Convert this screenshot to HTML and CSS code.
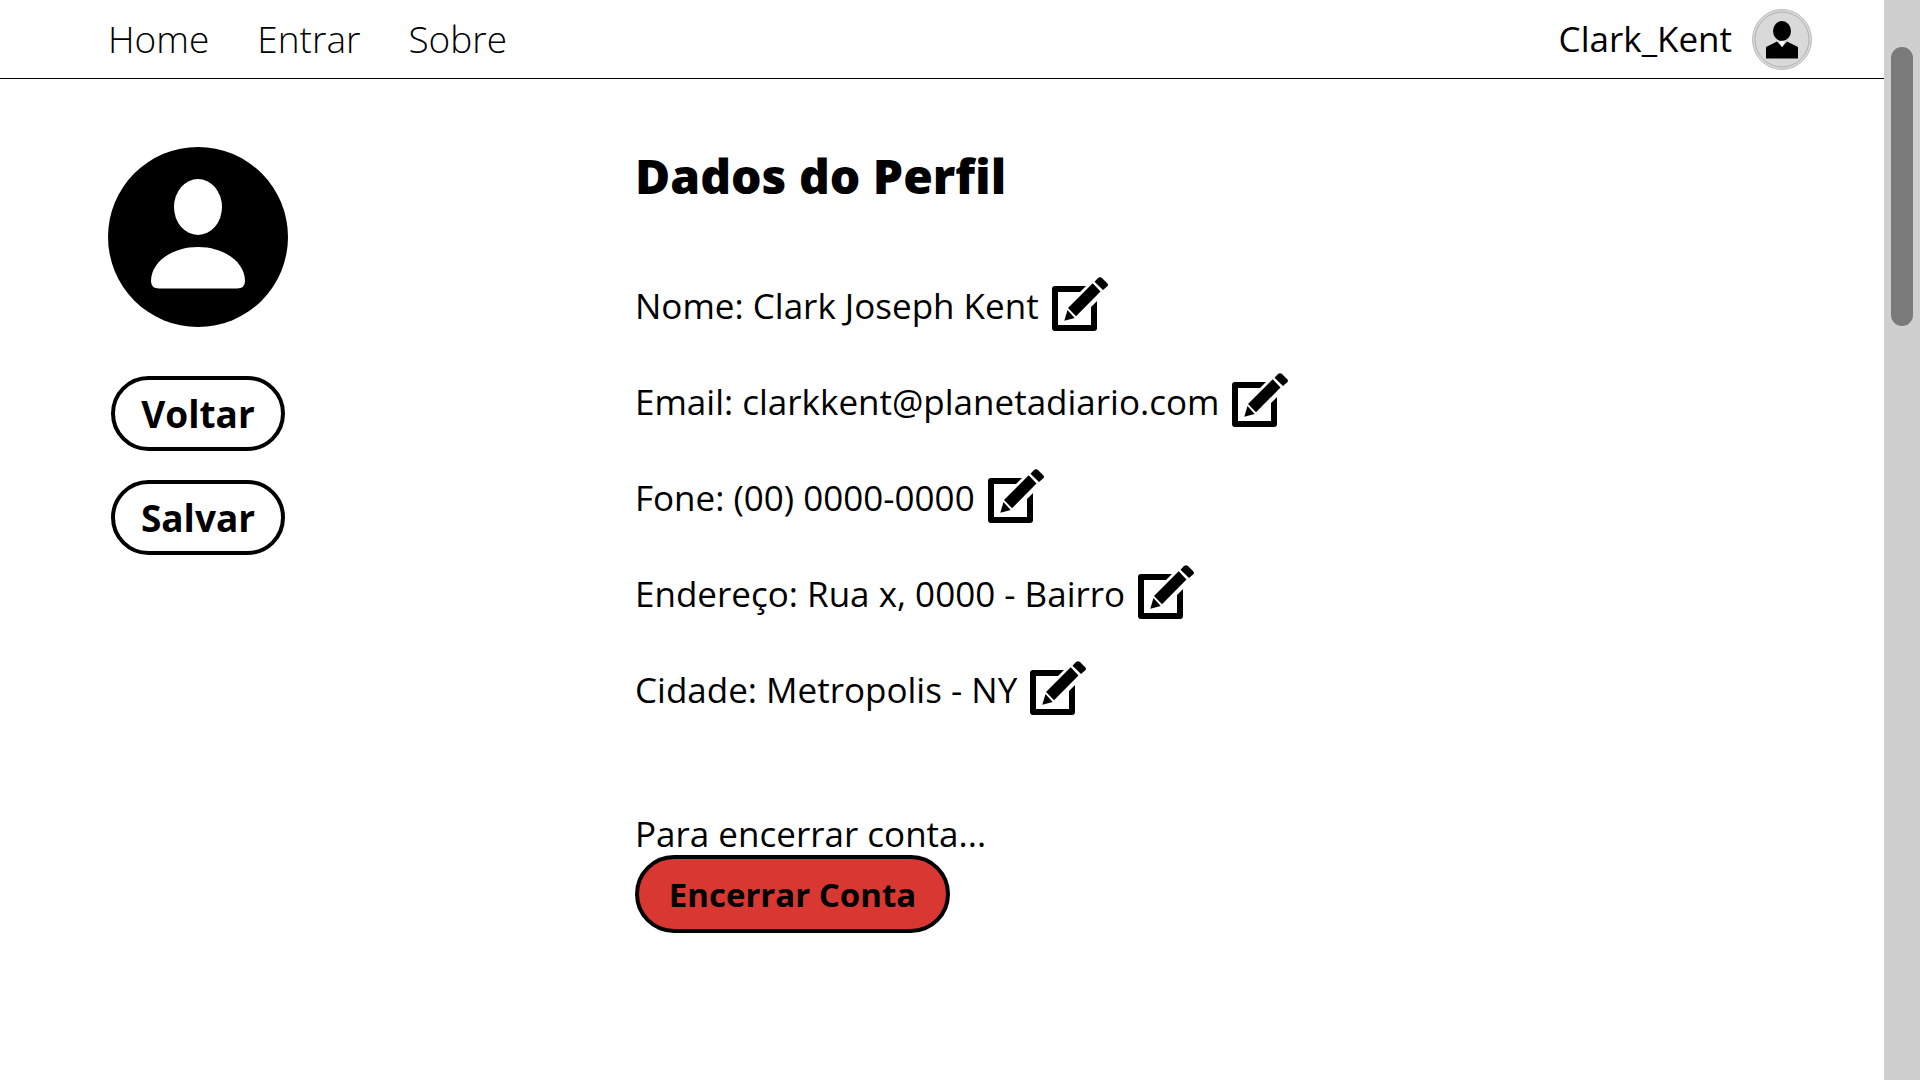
FILE: index.html
```html
<!DOCTYPE html>
<html lang="pt-BR">
<head>
<meta charset="utf-8">
<meta name="viewport" content="width=device-width, initial-scale=1">
<title>Dados do Perfil</title>
<link rel="stylesheet" href="styles.css">
</head>
<body>
<svg class="sprite" aria-hidden="true">
  <symbol id="edit" viewBox="0 0 56 54">
    <path d="M34 9H3Q0 9 0 12V51Q0 54 3 54H42Q45 54 45 51V24L39 30V48H6V15H28Z"/>
    <path d="M16 31L40.700 6.300L48.500 14.500L24 39.300Z"/>
    <path d="M15.500 33L22.700 41L12.300 43.700Z"/>
    <path d="M42.500 4.700L46 1Q48 -.7 50 1L55 6Q57 8 55 9.500L51 13Z"/>
  </symbol>
</svg>
<div class="page">
  <header class="topbar">
    <nav class="menu">
      <a href="#">Home</a>
      <a href="#">Entrar</a>
      <a href="#">Sobre</a>
    </nav>
    <a class="user" href="#">
      <span>Clark_Kent</span>
      <svg class="user-icon" viewBox="0 0 60 61" aria-hidden="true">
        <ellipse cx="30" cy="30.500" rx="29.500" ry="30" fill="#d9d9d9" stroke="#bdbdbd"/>
        <ellipse cx="30" cy="30.500" rx="27" ry="27.500" fill="#d9d9d9" stroke="#b0b0b0"/>
        <ellipse cx="30" cy="22" rx="9" ry="10"/>
        <path d="M14 49.500V38L25 32.500L30 38L35 32.500L46 38V49.500Z"/>
        <path d="M27.500 33.500L30 31.500L32.500 33.500L30 38Z" fill="#fff"/>
      </svg>
    </a>
  </header>
  <main class="content">
    <aside class="side">
      <svg class="avatar" viewBox="0 0 180 180" role="img" aria-label="Foto do perfil">
        <circle cx="90" cy="90" r="90"/>
        <ellipse cx="90" cy="60" rx="24" ry="28" fill="#fff"/>
        <path d="M43 134C43 115 64 100 90 100S137 115 137 134Q137 141.500 129 141.500H51Q43 141.500 43 134Z" fill="#fff"/>
      </svg>
      <button class="btn" type="button">Voltar</button>
      <button class="btn" type="button">Salvar</button>
    </aside>
    <section class="profile">
      <h1>Dados do Perfil</h1>
      <ul class="fields">
        <li><span>Nome: Clark Joseph Kent</span><button class="edit" type="button" aria-label="Editar nome"><svg><use href="#edit"/></svg></button></li>
        <li><span>Email: clarkkent@planetadiario.com</span><button class="edit" type="button" aria-label="Editar email"><svg><use href="#edit"/></svg></button></li>
        <li><span>Fone: (00) 0000-0000</span><button class="edit" type="button" aria-label="Editar fone"><svg><use href="#edit"/></svg></button></li>
        <li><span>Endereço: Rua x, 0000 - Bairro</span><button class="edit" type="button" aria-label="Editar endereço"><svg><use href="#edit"/></svg></button></li>
        <li><span>Cidade: Metropolis - NY</span><button class="edit" type="button" aria-label="Editar cidade"><svg><use href="#edit"/></svg></button></li>
      </ul>
      <p class="note">Para encerrar conta...</p>
      <button class="btn btn-danger" type="button">Encerrar Conta</button>
    </section>
  </main>
</div>
<div class="track"><div class="thumb"></div></div>
</body>
</html>
```
FILE: styles.css
```css
* {
  box-sizing: border-box;
}

body {
  display: flex;
  min-height: 100vh;
  margin: 0;
  background: #fff;
  color: #000;
  font-family: "Open Sans", "Noto Sans", sans-serif;
  font-size: 35px;
  line-height: 48px;
}

a {
  color: inherit;
  text-decoration: none;
}

button {
  font-family: inherit;
  color: inherit;
  cursor: pointer;
}

.sprite {
  position: absolute;
  width: 0;
  height: 0;
}

.page {
  flex: 1;
}

.topbar {
  display: flex;
  align-items: center;
  justify-content: space-between;
  height: 79px;
  padding: 0 72px 0 108px;
  border-bottom: 1px solid #000;
}

.menu {
  display: flex;
  gap: 48px;
  font-size: 37px;
  font-weight: 300;
}

.user {
  display: flex;
  align-items: center;
  gap: 20px;
}

.user-icon {
  width: 60px;
  height: 61px;
}

.content {
  display: grid;
  grid-template-columns: 180px 1fr;
  column-gap: 347px;
  padding: 68px 72px 96px 108px;
}

.side {
  display: flex;
  flex-direction: column;
  align-items: center;
}

.avatar {
  width: 180px;
  height: 180px;
  margin-bottom: 20px;
}

.btn {
  width: 174px;
  height: 75px;
  padding: 0;
  border: 4px solid #000;
  border-radius: 38px;
  background: #fff;
  font-size: 37px;
  font-weight: 700;
}

.side .btn {
  margin-top: 29px;
}

.profile h1 {
  margin: 0;
  padding-bottom: 53px;
  font-size: 48px;
  font-weight: 800;
  line-height: 58px;
}

.fields {
  margin: 0;
  padding: 0;
  list-style: none;
}

.fields li {
  display: flex;
  align-items: center;
  gap: 13px;
  height: 96px;
}

.edit {
  padding: 0 0 4px;
  border: 0;
  background: none;
}

.edit svg {
  display: block;
  width: 56px;
  height: 54px;
}

.note {
  margin: 0;
  padding-top: 75px;
  line-height: 42px;
}

.btn-danger {
  display: block;
  width: 315px;
  height: 78px;
  border-radius: 39px;
  background: #d93732;
  font-size: 33px;
}

.track {
  width: 36px;
  padding: 47px 7px;
  background: #cfcfcf;
}

.thumb {
  height: 279px;
  border-radius: 11px;
  background: #7a7a7a;
}
```
